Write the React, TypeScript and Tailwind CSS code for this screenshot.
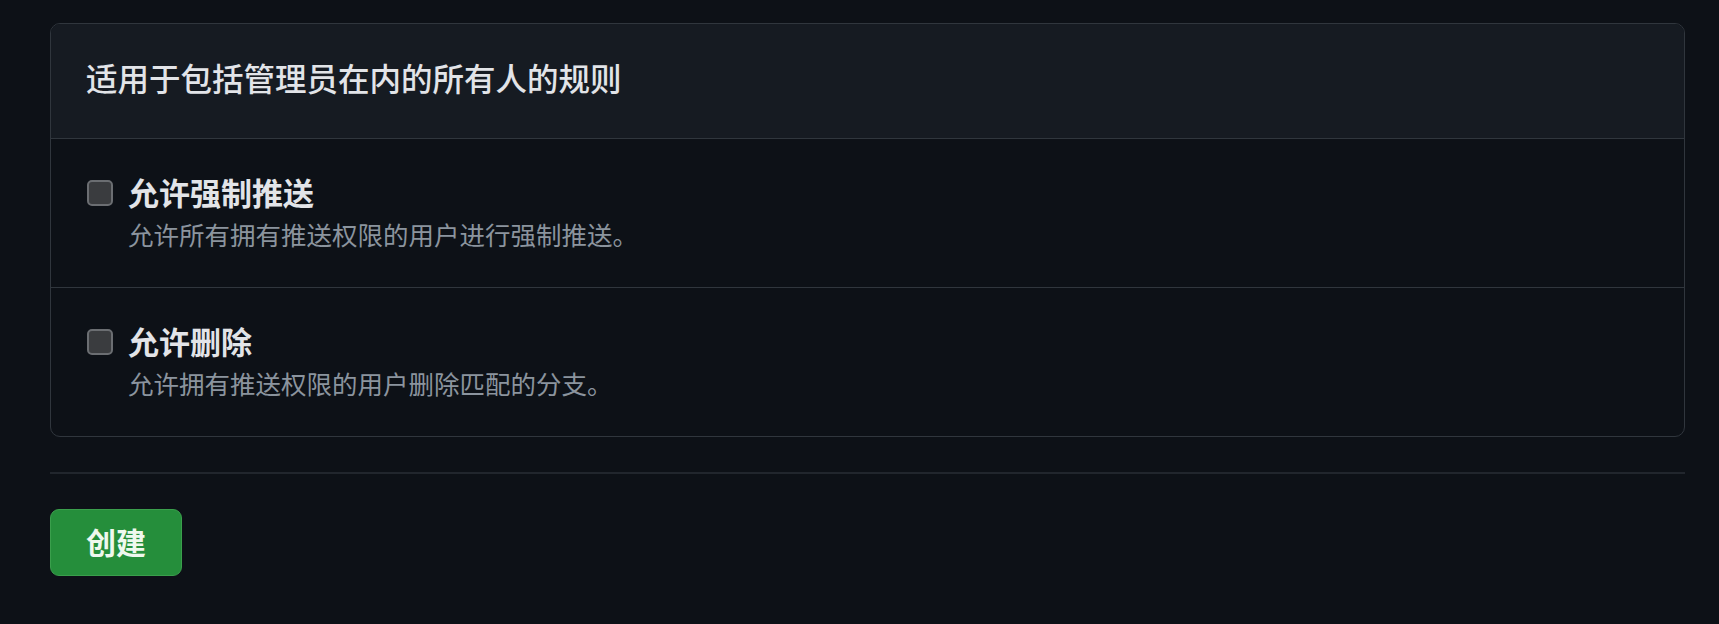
import React from "react";

const font = { fontFamily: '"Noto Sans", "Noto Sans CJK SC", sans-serif' };

function Row({ title, desc, last }: { title: string; desc: string; last?: boolean }) {
  return (
    <div className={`flex items-start pl-[36px] pt-[34px] pb-[34px] ${last ? "" : "border-b border-[#30363d]"}`}>
      <div className="mt-[7px] h-[26px] w-[26px] shrink-0 rounded-[5px] border-2 border-[#6b6e72] bg-[#3a3c3f]" />
      <div className="ml-[15px] flex flex-col">
        <div className="text-[31px] font-bold leading-[40px] text-[#e2e4e8]">{title}</div>
        <div className="mt-[4px] text-[25.5px] leading-[36px] text-[#8b949e]">{desc}</div>
      </div>
    </div>
  );
}

export default function App() {
  return (
    <div className="min-h-[624px] w-full bg-[#0d1117] pl-[50px] pr-[34px] pt-[23px]" style={font}>
      <div className="overflow-hidden rounded-[10px] border border-[#30363d]">
        <div className="flex h-[115px] items-center border-b border-[#30363d] bg-[#161b22] pl-[35px] pb-[4px]">
          <span className="text-[31.5px] font-medium leading-[44px] text-[#e2e4e8]">
            适用于包括管理员在内的所有人的规则
          </span>
        </div>
        <Row title="允许强制推送" desc="允许所有拥有推送权限的用户进行强制推送。" />
        <Row title="允许删除" desc="允许拥有推送权限的用户删除匹配的分支。" last />
      </div>
      <div className="mt-[35px] h-[2px] bg-[#21262d]" />
      <div className="mt-[35px]">
        <button className="flex h-[67px] w-[132px] items-center justify-center rounded-[9px] border border-[#3a9f4c] bg-[#258e3b] text-[30px] font-bold text-[#eef8ee]">
          创建
        </button>
      </div>
    </div>
  );
}
